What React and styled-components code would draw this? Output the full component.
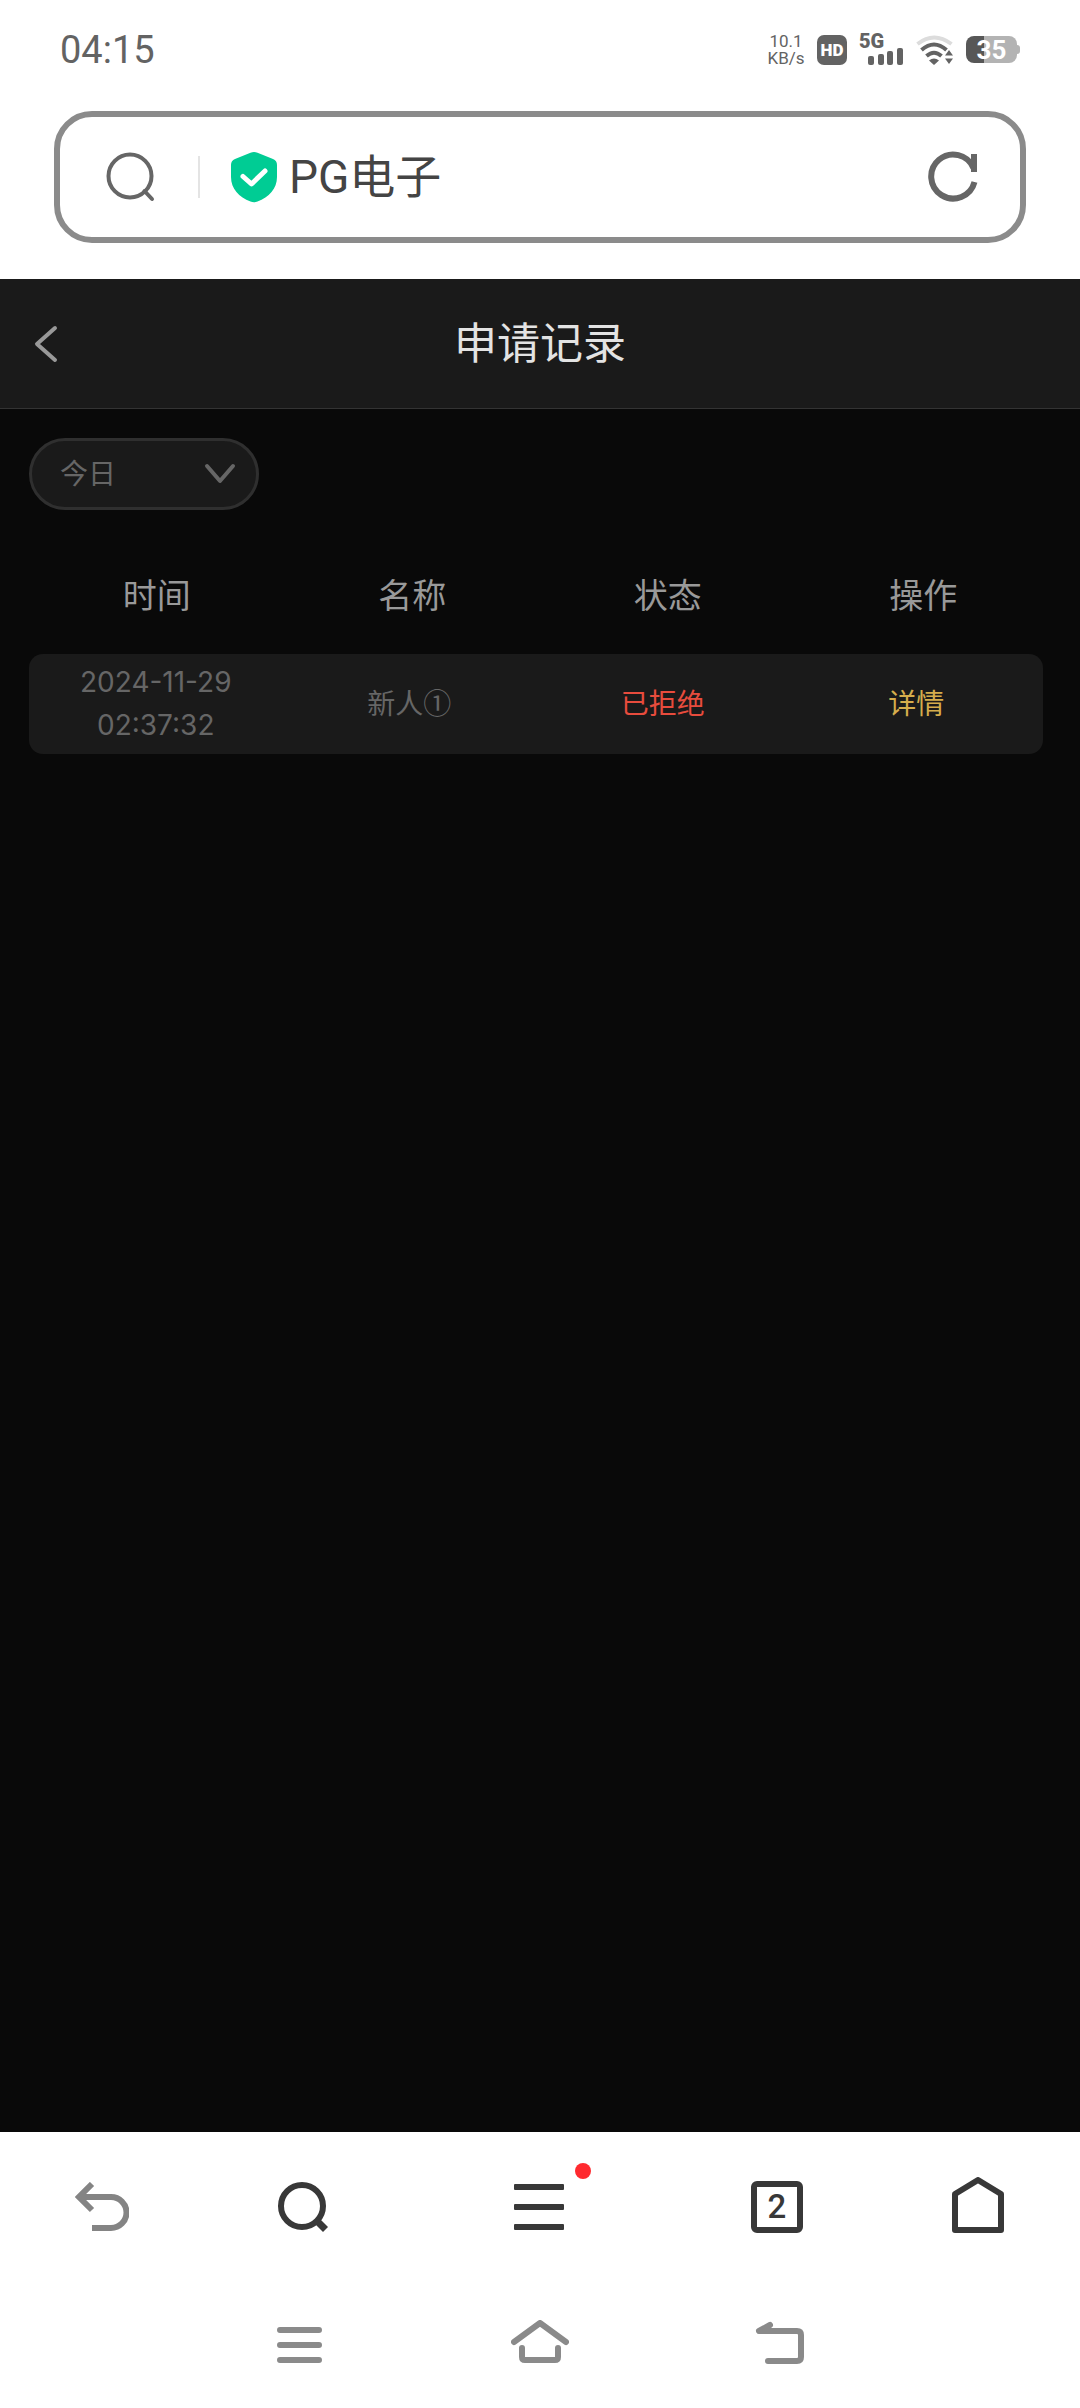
import React from "react";
import styled, { createGlobalStyle } from "styled-components";

const GlobalStyle = createGlobalStyle`
  *, *::before, *::after { box-sizing: border-box; }
  body {
    margin: 0;
    background: #fff;
    font-family: Roboto, "Noto Sans CJK SC", sans-serif;
  }
  button, input, select { font: inherit; color: inherit; }
  svg { display: block; flex: none; }
`;

const Page = styled.div`
  display: flex;
  flex-direction: column;
  min-height: 100vh;
`;

const StatusBar = styled.div`
  display: flex;
  align-items: center;
  justify-content: space-between;
  height: 99px;
  padding: 0 60px;
  color: #636363;
`;

const Clock = styled.time`
  font-size: 38px;
  line-height: 44px;
`;

const StatusIcons = styled.div`
  display: flex;
  align-items: center;
  gap: 12px;
`;

const Speed = styled.div`
  width: 38px;
  font-size: 17px;
  line-height: 17px;
  text-align: center;
`;

const HdBadge = styled.span`
  width: 30px;
  height: 30px;
  border-radius: 7px;
  background: #636363;
  color: #fff;
  font-size: 17px;
  font-weight: 900;
  line-height: 31px;
  text-align: center;
`;

const Signal = styled.span`
  display: flex;
  flex-direction: column;
  width: 45px;
  font-size: 20px;
  font-weight: 900;
  line-height: 14px;
`;

const Bars = styled.svg`
  align-self: flex-end;
`;

const Battery = styled.span`
  display: flex;
  align-items: center;
`;

const BatteryLevel = styled.span`
  width: 51px;
  height: 27px;
  border-radius: 8px;
  background: linear-gradient(90deg, #575757 35%, #b3b3b3 35%);
  color: #fff;
  font-size: 26px;
  font-weight: 700;
  line-height: 28px;
  text-align: center;
`;

const BatteryTip = styled.span`
  width: 3px;
  height: 9px;
  border-radius: 0 3px 3px 0;
  background: #b3b3b3;
`;

const AddressArea = styled.div`
  height: 180px;
  padding: 12px 54px 0;
`;

const AddressBar = styled.form`
  display: flex;
  align-items: center;
  height: 132px;
  padding: 0 42px 0 46px;
  border: 6px solid #8b8b8b;
  border-radius: 38px;
`;

const Divider = styled.span`
  width: 2px;
  height: 42px;
  margin: 0 29px 0 42px;
  background: #e4e4e4;
`;

const AddressInput = styled.input`
  flex: 1;
  min-width: 0;
  height: 68px;
  margin-left: 10px;
  padding: 0;
  border: 0;
  outline: 0;
  background: none;
  color: #444;
  font-size: 46px;
  line-height: 68px;
`;

const IconButton = styled.button`
  position: relative;
  display: flex;
  align-items: center;
  justify-content: center;
  height: 100%;
  padding: 0;
  border: 0;
  background: none;
  cursor: pointer;
`;

const AppHeader = styled.header`
  display: grid;
  grid-template-columns: 92px 1fr 92px;
  align-items: center;
  height: 130px;
  border-bottom: 1px solid #333;
  background: #1a1a1a;
`;

const Title = styled.h1`
  margin: 0;
  color: #e3e3e3;
  font-size: 43px;
  font-weight: 400;
  line-height: 60px;
  text-align: center;
`;

const Content = styled.main`
  flex: 1;
  padding: 29px;
  background: #090909;
`;

const RangePicker = styled.label`
  position: relative;
  display: block;
  width: 230px;
`;

const RangeSelect = styled.select`
  display: block;
  width: 100%;
  height: 72px;
  padding: 0 60px 0 28px;
  border: 3px solid #2f2f2f;
  border-radius: 36px;
  outline: 0;
  appearance: none;
  background: #1a1a1a;
  color: #666;
  font-size: 28px;
`;

const RangeArrow = styled.svg`
  position: absolute;
  top: 25px;
  right: 23px;
  pointer-events: none;
`;

const Records = styled.table`
  display: block;
  margin-top: 26px;
  text-align: center;
`;

const RecordsHead = styled.thead`
  display: block;
`;

const RecordsBody = styled.tbody`
  display: block;
  padding-right: 8px;
`;

const Row = styled.tr`
  display: grid;
  grid-template-columns: repeat(4, 1fr);
  align-items: center;
  height: ${(p) => (p.$head ? "118px" : "100px")};
  border-radius: 14px;
  background: ${(p) => (p.$head ? "none" : "#1a1a1a")};
`;

const HeadCell = styled.th`
  padding: 2px 0 0;
  color: #999;
  font-size: 34px;
  font-weight: 400;
  line-height: 48px;
`;

const Cell = styled.td`
  padding: 0 40px;
  color: ${(p) => p.$color || "#666"};
  font-size: 28px;
  line-height: 43px;
`;

const TimeCell = styled(Cell)`
  font-family: Inter, sans-serif;
`;

const DetailLink = styled.a`
  color: inherit;
  text-decoration: none;
`;

const Toolbar = styled.nav`
  display: grid;
  grid-template-columns: 34fr 33fr 46fr 33fr 34fr;
  height: 150px;
`;

const Dot = styled.span`
  position: absolute;
  top: 31px;
  left: calc(50% + 35px);
  width: 16px;
  height: 16px;
  border-radius: 50%;
  background: #ff2a2f;
`;

const TabCount = styled.span`
  width: 52px;
  height: 52px;
  border: 6px solid #383838;
  border-radius: 6px;
  color: #383838;
  font-size: 33px;
  font-weight: 500;
  line-height: 40px;
  text-align: center;
`;

const SystemNav = styled.nav`
  display: grid;
  grid-template-columns: repeat(3, 1fr);
  height: 126px;
  padding: 0 calc(100% / 6);
`;

const WifiIcon = () => (
  <svg width="38" height="30" viewBox="0 0 38 30" fill="none" strokeWidth="4">
    <path d="M1.500 9Q18 -4 35.500 9" stroke="#dcdcdc" />
    <path d="M5.500 15Q18 4 30.500 15" stroke="#636363" />
    <path d="M10.500 21Q18 14.500 25.500 21" stroke="#636363" />
    <path d="M13 25.500Q18 21.500 23 25.500L18 30Z" fill="#636363" />
    <path d="M29 20.500L33 15L37 20.500ZM29 23.500H37L33 29Z" fill="#636363" />
  </svg>
);

const ShieldIcon = () => (
  <svg width="50" height="52" viewBox="0 0 50 52" fill="none">
    <path
      d="M21.500 1.700Q25 .3 28.500 1.700L44 8Q48 9.500 48 14V26C48 38 40 46 28.500 50.500Q25 52 21.500 50.500C10 46 2 38 2 26V14Q2 9.500 6 8Z"
      fill="#00cc94"
    />
    <path d="M14 25.500L22.500 33L36 20" stroke="#fff" strokeWidth="5" strokeLinecap="round" strokeLinejoin="round" />
  </svg>
);

const records = [
  { date: "2024-11-29", time: "02:37:32", name: "新人①", status: "已拒绝" },
];

export default function App() {
  return (
    <Page>
      <GlobalStyle />
      <StatusBar>
        <Clock>04:15</Clock>
        <StatusIcons>
          <Speed>
            10.1
            <br />
            KB/s
          </Speed>
          <HdBadge>HD</HdBadge>
          <Signal>
            5G
            <Bars width="36" height="17" viewBox="0 0 36 17" fill="#636363">
              <rect x="0" y="8" width="6" height="9" rx="2" />
              <rect x="10" y="6" width="6" height="11" rx="2" />
              <rect x="19" y="3" width="6" height="14" rx="2" />
              <rect x="29" y="0" width="6" height="17" rx="2" />
            </Bars>
          </Signal>
          <WifiIcon />
          <Battery>
            <BatteryLevel>35</BatteryLevel>
            <BatteryTip />
          </Battery>
        </StatusIcons>
      </StatusBar>

      <AddressArea>
        <AddressBar onSubmit={(e) => e.preventDefault()}>
          <svg width="50" height="50" viewBox="0 0 50 50" fill="none" stroke="#666" strokeWidth="4">
            <circle cx="24" cy="24" r="21.500" />
            <path d="M38.500 39L46 47" strokeLinecap="round" />
          </svg>
          <Divider />
          <ShieldIcon />
          <AddressInput aria-label="地址" defaultValue="PG电子" />
          <IconButton type="button" aria-label="刷新">
            <svg width="50" height="52" viewBox="0 0 50 52" fill="none" stroke="#666" strokeWidth="6">
              <path d="M45.500 17A22 22 0 1 0 46.500 31" />
              <path d="M46 3V21" />
              <path d="M43 10V20H46Z" fill="#666" stroke="none" />
            </svg>
          </IconButton>
        </AddressBar>
      </AddressArea>

      <AppHeader>
        <IconButton type="button" aria-label="返回">
          <svg width="24" height="38" viewBox="0 0 24 38" fill="none" stroke="#999" strokeWidth="4" strokeLinecap="round" strokeLinejoin="round">
            <path d="M21 3L3 19L21 35" />
          </svg>
        </IconButton>
        <Title>申请记录</Title>
      </AppHeader>

      <Content>
        <RangePicker>
          <RangeSelect aria-label="日期范围" defaultValue="today">
            <option value="today">今日</option>
          </RangeSelect>
          <RangeArrow width="32" height="22" viewBox="0 0 32 22" fill="none" stroke="#666" strokeWidth="4" strokeLinecap="round" strokeLinejoin="round">
            <path d="M3 3L16 18L29 3" />
          </RangeArrow>
        </RangePicker>

        <Records>
          <RecordsHead>
            <Row $head>
              <HeadCell scope="col">时间</HeadCell>
              <HeadCell scope="col">名称</HeadCell>
              <HeadCell scope="col">状态</HeadCell>
              <HeadCell scope="col">操作</HeadCell>
            </Row>
          </RecordsHead>
          <RecordsBody>
            {records.map((r) => (
              <Row key={r.date + r.time}>
                <TimeCell>
                  {r.date} {r.time}
                </TimeCell>
                <Cell>{r.name}</Cell>
                <Cell $color="#e84c3d">{r.status}</Cell>
                <Cell $color="#d5ad4c">
                  <DetailLink href="#detail">详情</DetailLink>
                </Cell>
              </Row>
            ))}
          </RecordsBody>
        </Records>
      </Content>

      <Toolbar aria-label="浏览器工具栏">
        <IconButton type="button" aria-label="后退">
          <svg width="54" height="50" viewBox="0 0 54 50" fill="none" stroke="#848484" strokeWidth="6">
            <path d="M17 2L4 15L17 28" />
            <path d="M5 15H36A15.500 15.500 0 0 1 36 46H17" />
          </svg>
        </IconButton>
        <IconButton type="button" aria-label="搜索">
          <svg width="52" height="52" viewBox="0 0 52 52" fill="none" stroke="#383838" strokeWidth="6">
            <circle cx="25" cy="25" r="21" />
            <path d="M39 39L48.500 48.500" strokeWidth="7" />
          </svg>
        </IconButton>
        <IconButton type="button" aria-label="菜单">
          <svg width="52" height="46" viewBox="0 0 52 46" fill="#383838">
            <rect x="0" y="0" width="50" height="6" rx="1" />
            <rect x="0" y="20" width="50" height="6" rx="1" />
            <rect x="0" y="40" width="50" height="6" rx="1" />
          </svg>
          <Dot />
        </IconButton>
        <IconButton type="button" aria-label="标签页">
          <TabCount>2</TabCount>
        </IconButton>
        <IconButton type="button" aria-label="主页">
          <svg width="52" height="60" viewBox="0 0 52 60" fill="none" stroke="#383838" strokeWidth="6" strokeLinejoin="round">
            <path d="M3 17L26 3L49 17V53H3Z" />
          </svg>
        </IconButton>
      </Toolbar>

      <SystemNav aria-label="系统导航">
        <IconButton type="button" aria-label="最近任务">
          <svg width="46" height="36" viewBox="0 0 46 36" stroke="#8a8a8a" strokeWidth="6" strokeLinecap="round">
            <path d="M3 3H42M3 18H42M3 33H42" />
          </svg>
        </IconButton>
        <IconButton type="button" aria-label="桌面">
          <svg width="58" height="50" viewBox="0 0 58 50" fill="none" stroke="#8a8a8a" strokeWidth="6" strokeLinecap="round" strokeLinejoin="round">
            <path d="M3 22L29 3L55 22" />
            <path d="M11 28V37Q11 40 14 40H44Q47 40 47 37V28" />
          </svg>
        </IconButton>
        <IconButton type="button" aria-label="返回上一级">
          <svg width="50" height="48" viewBox="0 0 50 48" fill="none" stroke="#8a8a8a" strokeWidth="6" strokeLinecap="round" strokeLinejoin="round">
            <path d="M15 4L4 10H42Q46 10 46 14V36Q46 40 42 40H13" />
          </svg>
        </IconButton>
      </SystemNav>
    </Page>
  );
}
